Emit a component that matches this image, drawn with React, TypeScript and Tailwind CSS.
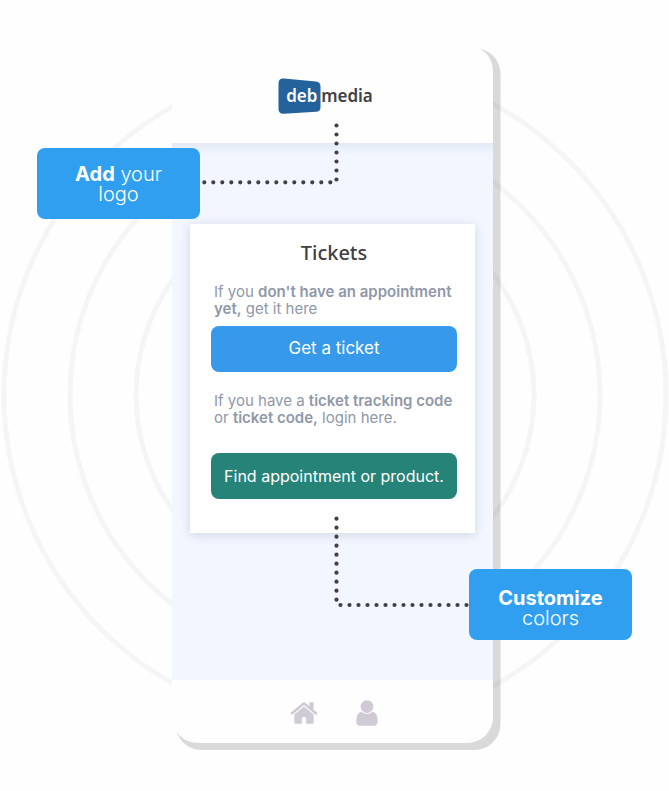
import React from "react";

function Rings() {
  return (
    <svg
      className="pointer-events-none absolute top-[61px] left-1/2 h-[668px] w-[668px] -translate-x-1/2"
      viewBox="0 0 668 668"
      fill="none"
      stroke="#000"
      strokeOpacity="0.035"
      strokeWidth="5"
      aria-hidden="true"
    >
      <circle cx="334" cy="334" r="331" />
      <circle cx="334" cy="334" r="265" />
      <circle cx="334" cy="334" r="199" />
    </svg>
  );
}

function Logo() {
  return (
    <div className="relative flex h-9 items-center pl-2 font-['Noto_Sans',sans-serif] text-[17px] leading-6 font-semibold">
      <svg className="absolute top-0 left-0 h-9 w-[43px]" viewBox="0 0 43 36" aria-hidden="true">
        <path
          d="M6 .6 38 3.6Q42.500 4 42.500 8.500V29.500Q42.500 33.500 38 33.800L6 35.700Q.5 36 .5 31V5.500Q.5 0 6 .6Z"
          fill="#24629b"
        />
      </svg>
      <span className="relative w-[35px] text-white">deb</span>
      <span className="relative text-[#414042]">media</span>
    </div>
  );
}

function HomeIcon() {
  return (
    <svg className="size-[30px]" viewBox="0 0 1792 1792" fill="currentColor" aria-hidden="true">
      <path d="M1472 992v480q0 26-19 45t-45 19h-384v-384h-256v384h-384q-26 0-45-19t-19-45v-480q0-1 .5-3t.5-3l575-474 575 474q1 2 1 6zm223-69l-62 74q-8 9-21 11h-3q-13 0-21-7l-692-577-692 577q-12 8-24 7-13-2-21-11l-62-74q-8-10-7-23.5t11-21.5l719-599q32-26 76-26t76 26l244 204v-195q0-14 9-23t23-9h192q14 0 23 9t9 23v408l219 182q10 8 11 21.500t-7 23.500z" />
    </svg>
  );
}

function UserIcon() {
  return (
    <svg className="size-[30px]" viewBox="0 0 1792 1792" fill="currentColor" aria-hidden="true">
      <path d="M1536 1399q0 109-62.5 187t-150.5 78h-854q-88 0-150.5-78t-62.5-187q0-85 8.5-160.5t31.5-152 58.5-131 94-89 134.5-34.5q131 128 313 128t313-128q76 0 134.5 34.5t94 89 58.5 131 31.5 152 8.5 160.5zm-256-887q0 159-112.5 271.5t-271.5 112.5-271.5-112.5-112.5-271.5 112.5-271.5 271.5-112.5 271.5 112.5 112.5 271.500z" />
    </svg>
  );
}

function TicketsCard() {
  return (
    <section className="bg-white pt-[15px] pr-[18px] pb-[34px] pl-[21px] shadow-[0_2px_10px_rgba(70,85,105,0.18)]">
      <h1 className="text-center font-['Noto_Sans',sans-serif] text-xl leading-7 font-medium text-[#414042]">
        Tickets
      </h1>
      <p className="mt-4 pl-[3px] text-[15px] leading-[17px] text-[#8f98a8]">
        If you <b className="font-semibold">don't have an appointment yet,</b> get it here
      </p>
      <button
        type="button"
        className="mt-[9px] h-[46px] w-full rounded-lg bg-[#3699ea] text-[17px] text-white"
      >
        Get a ticket
      </button>
      <p className="mt-5 pl-[3px] text-[15px] leading-[17px] text-[#8f98a8]">
        If you have a <b className="font-semibold">ticket tracking code</b> or{" "}
        <b className="font-semibold">ticket code,</b> login here.
      </p>
      <button
        type="button"
        className="mt-[27px] h-[46px] w-full rounded-lg bg-[#268377] text-base whitespace-nowrap text-white"
      >
        Find appointment or product.
      </button>
    </section>
  );
}

function Connectors() {
  return (
    <svg
      className="pointer-events-none absolute top-[78px] left-[30px] h-[486px] w-[270px]"
      viewBox="0 0 270 486"
      fill="none"
      stroke="#414042"
      strokeWidth="4.200"
      strokeLinecap="round"
      strokeDasharray="0 9"
      aria-hidden="true"
    >
      <path d="M134.500 2.500V57" />
      <path d="M2.300 59.300H129" />
      <path d="M134.500 395.700V477" />
      <path d="M138.500 482H265" />
    </svg>
  );
}

export default function App() {
  return (
    <div className="relative flex min-h-screen justify-center overflow-hidden bg-[#fefefe] pt-[45px] pb-12 font-['Inter',sans-serif]">
      <div className="absolute top-12 left-1/2 h-[702px] w-[325px] -translate-x-1/2 pl-[3px]">
        <div className="h-full w-[325px] rounded-[26px] bg-[#d9d9d9]" />
      </div>
      <Rings />
      <div className="relative w-full max-w-[325px] pr-1">
        <div className="overflow-hidden rounded-[26px] bg-[#fefefe]">
          <header className="flex h-[98px] justify-center pt-[33px] pr-3.5">
            <Logo />
          </header>
          <main className="bg-[#f1f6ff] px-[18px] pt-[81px] pb-[147px] shadow-[inset_0_12px_12px_-10px_rgba(60,80,110,0.12)]">
            <TicketsCard />
          </main>
          <nav className="flex h-[63px] items-start justify-center gap-[33px] pt-[18px] pl-[5px] text-[#d0c9d6]">
            <button type="button" aria-label="Home">
              <HomeIcon />
            </button>
            <button type="button" aria-label="Profile">
              <UserIcon />
            </button>
          </nav>
        </div>
        <Connectors />
        <div className="absolute top-[103px] right-[297px] flex h-[71px] w-[163px] items-center justify-center rounded-lg bg-[#319fef] text-center text-xl leading-5 font-light text-white">
          <p>
            <b className="font-bold">Add</b> your
            <br />
            logo
          </p>
        </div>
        <div className="absolute top-[524px] left-[297px] flex h-[71px] w-[163px] items-center justify-center rounded-lg bg-[#319fef] pt-1.5 text-center text-xl leading-5 font-light text-white">
          <p>
            <b className="font-bold">Customize</b>
            <br />
            colors
          </p>
        </div>
      </div>
    </div>
  );
}
